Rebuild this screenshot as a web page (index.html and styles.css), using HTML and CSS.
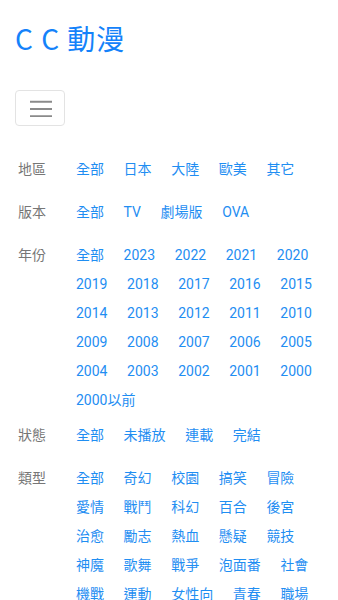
FILE: index.html
```html
<!DOCTYPE html>
<html lang="zh-Hant">
<head>
<meta charset="utf-8">
<title>CC 動漫</title>
<link rel="stylesheet" href="styles.css">
</head>
<body>
<header class="navbar">
  <a class="brand" href="#">C C 動漫</a>
  <button class="toggler" type="button" aria-label="menu">
    <svg class="toggler-icon" width="22" height="18" viewBox="0 0 22 18">
      <path d="M0 2.7H22M0 10H22M0 17.3H22" stroke="#8a8a8a" stroke-width="2" fill="none"/>
    </svg>
  </button>
</header>
<main class="filters">
  <div class="filter-row">
    <div class="label">地區</div>
    <div class="links">
      <a href="#">全部</a><a href="#">日本</a><a href="#">大陸</a><a href="#">歐美</a><a href="#">其它</a>
    </div>
  </div>
  <div class="filter-row">
    <div class="label">版本</div>
    <div class="links">
      <a href="#">全部</a><a href="#">TV</a><a href="#">劇場版</a><a href="#">OVA</a>
    </div>
  </div>
  <div class="filter-row">
    <div class="label">年份</div>
    <div class="links">
      <a href="#">全部</a><a href="#">2023</a><a href="#">2022</a><a href="#">2021</a><a href="#">2020</a>
      <a href="#">2019</a><a href="#">2018</a><a href="#">2017</a><a href="#">2016</a><a href="#">2015</a>
      <a href="#">2014</a><a href="#">2013</a><a href="#">2012</a><a href="#">2011</a><a href="#">2010</a>
      <a href="#">2009</a><a href="#">2008</a><a href="#">2007</a><a href="#">2006</a><a href="#">2005</a>
      <a href="#">2004</a><a href="#">2003</a><a href="#">2002</a><a href="#">2001</a><a href="#">2000</a>
      <a href="#">2000以前</a>
    </div>
  </div>
  <div class="filter-row">
    <div class="label">狀態</div>
    <div class="links">
      <a href="#">全部</a><a href="#">未播放</a><a href="#">連載</a><a href="#">完結</a>
    </div>
  </div>
  <div class="filter-row">
    <div class="label">類型</div>
    <div class="links">
      <a href="#">全部</a><a href="#">奇幻</a><a href="#">校園</a><a href="#">搞笑</a><a href="#">冒險</a>
      <a href="#">愛情</a><a href="#">戰鬥</a><a href="#">科幻</a><a href="#">百合</a><a href="#">後宮</a>
      <a href="#">治愈</a><a href="#">勵志</a><a href="#">熱血</a><a href="#">懸疑</a><a href="#">競技</a>
      <a href="#">神魔</a><a href="#">歌舞</a><a href="#">戰爭</a><a href="#">泡面番</a><a href="#">社會</a>
      <a href="#">機戰</a><a href="#">運動</a><a href="#">女性向</a><a href="#">青春</a><a href="#">職場</a>
    </div>
  </div>
</main>
</body>
</html>
```

FILE: styles.css
```css
html, body {
  margin: 0;
  padding: 0;
  background: #ffffff;
}

body {
  padding: 0 15px;
  font-family: Roboto, "Noto Sans CJK TC", sans-serif;
  font-size: 14px;
  color: #333333;
}

a {
  text-decoration: none;
}

.navbar {
  display: flex;
  flex-direction: column;
  align-items: flex-start;
  padding-top: 18px;
}

.brand {
  display: block;
  font-family: "Noto Sans CJK TC", sans-serif;
  font-size: 28px;
  line-height: 40px;
  letter-spacing: 1px;
  color: #1482fa;
}

.toggler {
  margin-top: 32px;
  box-sizing: border-box;
  width: 50px;
  height: 36px;
  padding: 0;
  background: #ffffff;
  border: 1px solid #e3e3e3;
  border-radius: 4px;
  display: flex;
  align-items: center;
  justify-content: center;
}

.toggler-icon {
  display: block;
  margin-left: 1px;
}

.filters {
  margin-top: 28.5px;
}

.filter-row {
  display: flex;
  align-items: flex-start;
  margin-bottom: 6px;
}

.label {
  box-sizing: border-box;
  flex: 0 0 61px;
  padding-left: 3px;
  height: 37px;
  line-height: 29px;
  color: #777777;
}

.links {
  flex: 1 1 auto;
  display: flex;
  flex-wrap: wrap;
  column-gap: 19.6px;
}

.links a {
  line-height: 29px;
  color: #1f8ef2;
  white-space: nowrap;
}
```
